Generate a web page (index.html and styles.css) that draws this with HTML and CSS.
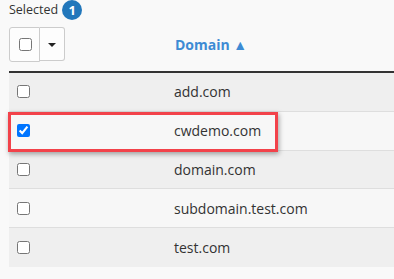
FILE: index.html
```html
<!DOCTYPE html>
<html>
<head>
<meta charset="utf-8">
<link rel="stylesheet" href="styles.css">
</head>
<body>
<div class="page">
  <div class="selected">Selected <span class="badge">1</span></div>
  <div class="grid">
    <div class="row head">
      <div class="cell sel">
        <div class="btn-group">
          <span class="btn btn-check"><input type="checkbox"></span>
          <span class="btn btn-caret"><span class="caret"></span></span>
        </div>
      </div>
      <div class="cell name"><span class="sort">Domain ▲</span></div>
    </div>
    <div class="row odd"><div class="cell sel"><input type="checkbox"></div><div class="cell name">add.com</div></div>
    <div class="row even"><div class="cell sel"><input type="checkbox" checked></div><div class="cell name">cwdemo.com</div></div>
    <div class="row odd"><div class="cell sel"><input type="checkbox"></div><div class="cell name">domain.com</div></div>
    <div class="row even"><div class="cell sel"><input type="checkbox"></div><div class="cell name">subdomain.test.com</div></div>
    <div class="row odd"><div class="cell sel"><input type="checkbox"></div><div class="cell name">test.com</div></div>
  </div>
  <div class="highlight"></div>
</div>
</body>
</html>
```
FILE: styles.css
```css
html, body {
  margin: 0;
  padding: 0;
  background: #f9f9f9;
}
body {
  font-family: "Open Sans", "Liberation Sans", sans-serif;
  font-size: 14px;
  color: #333;
}
.page {
  position: relative;
  padding-left: 9px;
}
.selected {
  height: 22px;
  display: flex;
  align-items: flex-start;
  font-size: 12.5px;
  color: #333;
  line-height: 20px;
  gap: 4px;
}
.badge {
  display: inline-flex;
  align-items: center;
  justify-content: center;
  width: 20px;
  height: 20px;
  margin-top: 0px;
  border-radius: 50%;
  background: #2277bb;
  color: #fff;
  font-weight: 700;
  font-size: 13px;
  line-height: 1;
}
.grid {
  display: flex;
  flex-direction: column;
}
.row {
  display: flex;
  align-items: center;
  box-sizing: border-box;
}
.row.head {
  height: 51px;
  align-items: flex-start;
  padding-top: 5px;
  border-bottom: 2px solid #333;
}
.row.odd { background: #efefef; }
.row.even { background: #f7f7f7; }
.row.odd, .row.even {
  height: 38.75px;
  border-bottom: 1px solid #dedede;
}
.row:last-child { border-bottom: none; }
.cell.sel {
  width: 157px;
  padding-left: 8px;
  box-sizing: border-box;
  display: flex;
  align-items: center;
}
.row.head .cell.sel { padding-left: 0; }
.cell.name {
  padding-left: 8px;
  white-space: nowrap;
}
.row.head .cell.name {
  height: 35px;
  display: flex;
  align-items: center;
  padding-left: 9px;
}
.sort {
  color: #3d8bd4;
  font-weight: 700;
}
input[type="checkbox"] {
  margin: 0;
  width: 13px;
  height: 13px;
}
.btn-group {
  display: flex;
  align-items: flex-start;
}
.btn {
  display: flex;
  align-items: center;
  justify-content: center;
  box-sizing: border-box;
  border: 1px solid #cccccc;
  background: #fdfdfd;
}
.btn-check {
  width: 31px;
  height: 35px;
  border-radius: 3px 0 0 3px;
  padding-left: 1px;
}
.btn-caret {
  width: 25px;
  height: 34px;
  border-left: none;
  border-radius: 0 3px 3px 0;
}
.caret {
  width: 0;
  height: 0;
  border-left: 4px solid transparent;
  border-right: 4px solid transparent;
  border-top: 4px solid #222;
  margin-top: 1px;
}
.highlight {
  position: absolute;
  left: 8px;
  top: 112px;
  width: 270px;
  height: 40px;
  box-sizing: border-box;
  border: 3px solid #f2424a;
  box-shadow: 1px 2px 5px rgba(0, 0, 0, 0.35);
  pointer-events: none;
}
```
